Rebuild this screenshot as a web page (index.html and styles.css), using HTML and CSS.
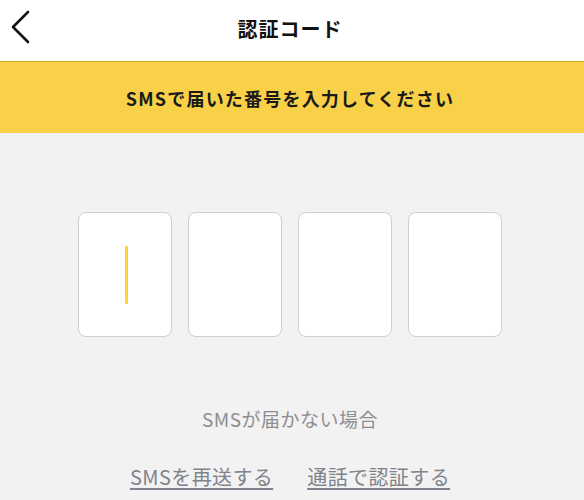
FILE: index.html
```html
<!DOCTYPE html>
<html lang="ja">
<head>
<meta charset="utf-8">
<link rel="stylesheet" href="styles.css">
</head>
<body>
<header class="header">
  <button class="back" aria-label="戻る">
    <svg width="22" height="34" viewBox="0 0 22 34"><path d="M18 2 L3 17 L18 32" fill="none" stroke="#111" stroke-width="2.6" stroke-linecap="round" stroke-linejoin="round"/></svg>
  </button>
  <h1 class="title">認証コード</h1>
</header>
<div class="banner">SMSで届いた番号を入力してください</div>
<main class="main">
  <div class="codes">
    <div class="code"><span class="cursor"></span></div>
    <div class="code"></div>
    <div class="code"></div>
    <div class="code"></div>
  </div>
  <p class="help">SMSが届かない場合</p>
  <div class="links">
    <a class="link" href="#">SMSを再送する</a>
    <a class="link" href="#">通話で認証する</a>
  </div>
</main>
</body>
</html>
```
FILE: styles.css
```css
html, body {
  margin: 0;
  padding: 0;
  background: #f2f2f2;
  font-family: "Noto Sans CJK JP", "Noto Sans", sans-serif;
}
.header {
  height: 61px;
  background: #fff;
  border-bottom: 1px solid #c9a62e;
  display: flex;
  align-items: center;
  justify-content: center;
  padding-right: 4px;
  position: relative;
}
.back {
  position: absolute;
  left: 10px;
  top: 10px;
  border: 0;
  background: none;
  padding: 0;
  width: 22px;
  height: 34px;
}
.title {
  margin: 0;
  font-size: 20px;
  font-weight: 700;
  color: #111;
  letter-spacing: 1px;
  line-height: 1;
  margin-top: -4px;
}
.banner {
  height: 71px;
  background: #f8d149;
  display: flex;
  align-items: center;
  justify-content: center;
  padding-right: 4px;
  font-size: 18px;
  font-weight: 700;
  color: #1a1a1a;
  letter-spacing: 1.2px;
}
.main {
  display: flex;
  flex-direction: column;
  align-items: center;
  padding-right: 4px;
}
.codes {
  display: flex;
  gap: 16px;
  margin-top: 79px;
}
.code {
  width: 92px;
  height: 123px;
  background: #fff;
  border: 1px solid #cfcfcf;
  border-radius: 8px;
  display: flex;
  align-items: center;
  justify-content: center;
}
.cursor {
  width: 3px;
  height: 58px;
  background: #fcd535;
  border-radius: 1px;
  margin-left: 3px;
}
.help {
  margin: 68px 0 0;
  font-size: 19px;
  color: #8e8e93;
  line-height: 28px;
  letter-spacing: 0.5px;
}
.links {
  display: flex;
  gap: 34px;
  margin-top: 30px;
}
.link {
  font-size: 20px;
  color: #80838c;
  text-decoration: underline;
  text-underline-offset: 3px;
  text-decoration-thickness: 1.5px;
  line-height: 28px;
  letter-spacing: 0.4px;
}
```
